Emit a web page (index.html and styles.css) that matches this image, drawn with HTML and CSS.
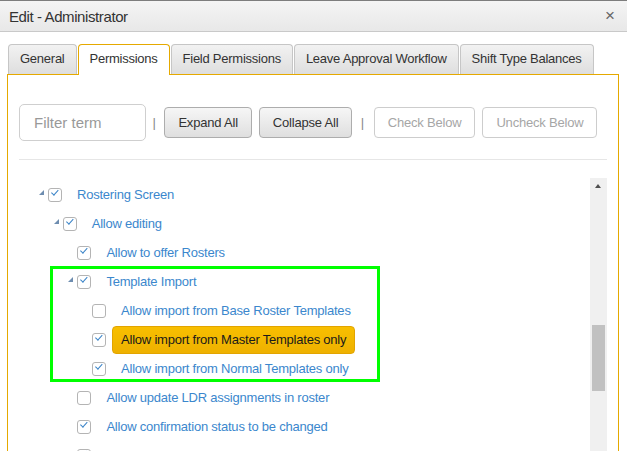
FILE: index.html
```html
<!DOCTYPE html>
<html lang="en">
<head>
  <meta charset="UTF-8" />
  <title>Edit - Administrator</title>
  <link rel="stylesheet" href="styles.css">
</head>
<body>
  <div class="dialog">
    <div class="titlebar">
      <span class="title">Edit - Administrator</span>
      <span class="close">&times;</span>
    </div>

    <div class="dialog-body">
      <ul class="tabs">
        <li class="tab">General</li>
        <li class="tab active">Permissions</li>
        <li class="tab">Field Permissions</li>
        <li class="tab">Leave Approval Workflow</li>
        <li class="tab">Shift Type Balances</li>
      </ul>

      <div class="tab-panel">
        <div class="toolbar">
          <input type="text" class="filter" placeholder="Filter term" />
          <span class="sep">|</span>
          <button class="btn">Expand All</button>
          <button class="btn">Collapse All</button>
          <span class="sep">|</span>
          <button class="btn" disabled>Check Below</button>
          <button class="btn" disabled>Uncheck Below</button>
        </div>

        <div class="divider"></div>

        <div class="tree-wrap">
          <ul class="tree">
            <li>
              <div class="node"><span class="toggle"></span><span class="cb checked"></span><span class="label">Rostering Screen</span></div>
              <ul>
                <li>
                  <div class="node"><span class="toggle"></span><span class="cb checked"></span><span class="label">Allow editing</span></div>
                  <ul>
                    <li><div class="node"><span class="toggle none"></span><span class="cb checked"></span><span class="label">Allow to offer Rosters</span></div></li>
                    <li>
                      <div class="node"><span class="toggle"></span><span class="cb checked"></span><span class="label">Template Import</span></div>
                      <ul>
                        <li><div class="node"><span class="toggle none"></span><span class="cb"></span><span class="label">Allow import from Base Roster Templates</span></div></li>
                        <li><div class="node"><span class="toggle none"></span><span class="cb checked"></span><span class="label selected">Allow import from Master Templates only</span></div></li>
                        <li><div class="node"><span class="toggle none"></span><span class="cb checked"></span><span class="label">Allow import from Normal Templates only</span></div></li>
                      </ul>
                    </li>
                    <li><div class="node"><span class="toggle none"></span><span class="cb"></span><span class="label">Allow update LDR assignments in roster</span></div></li>
                    <li><div class="node"><span class="toggle none"></span><span class="cb checked"></span><span class="label">Allow confirmation status to be changed</span></div></li>
                    <li><div class="node"><span class="toggle none"></span><span class="cb checked"></span><span class="label">Allow roster comments</span></div></li>
                  </ul>
                </li>
              </ul>
            </li>
          </ul>

          <div class="scrollbar">
            <span class="scroll-up"></span>
            <span class="scroll-thumb"></span>
          </div>

          <!-- highlight box drawn over the template import group -->
          <div class="mark-box"></div>
        </div>
      </div>
    </div>
  </div>
</body>
</html>
```

FILE: styles.css
```css
body {
  margin: 0;
  font-family: "Liberation Sans", Arial, sans-serif;
  background: #fff;
  overflow: hidden;
}

.dialog {
  border-top: 1px solid #7d7d7d;
}

.titlebar {
  height: 30px;
  display: flex;
  align-items: center;
  justify-content: space-between;
  padding: 0 12px 0 9px;
  background: linear-gradient(#f4f4f4, #e8e8e8);
  border-bottom: 1px solid #c9c9c9;
}

.title {
  font-size: 15px;
  color: #333;
  letter-spacing: -0.4px;
}

.close {
  font-size: 17px;
  color: #666;
}

.dialog-body {
  padding: 12px 8px 0 7px;
}

.tabs {
  list-style: none;
  margin: 0 0 0 1px;
  padding: 0;
  display: flex;
  gap: 1px;
  position: relative;
  z-index: 1;
}

.tab {
  height: 29px;
  line-height: 28px;
  padding: 0 11px;
  font-size: 13px;
  color: #333;
  letter-spacing: -0.25px;
  white-space: nowrap;
  background: linear-gradient(#f2f2f2, #dedede);
  border: 1px solid #c6c6c6;
  border-bottom: none;
  border-radius: 4px 4px 0 0;
  margin-bottom: -1px;
}

.tab.active {
  background: #fff;
  border-color: #e5a900;
  height: 30px;
}

.tab-panel {
  border: 1px solid #e5a900;
  border-bottom: none;
  padding: 29px 11px 0 11px;
  height: 500px;
}

.toolbar {
  display: flex;
  align-items: center;
  height: 37px;
}

.filter {
  box-sizing: border-box;
  flex-shrink: 0;
  width: 127px;
  height: 37px;
  border: 1px solid #cfcfcf;
  border-radius: 5px;
  padding: 0 14px;
  font-family: inherit;
  font-size: 15px;
  color: #333;
}

.filter::placeholder {
  color: #999;
}

.sep {
  font-size: 13px;
  color: #888;
  margin: 0 8.5px 0 6.5px;
}

.btn + .sep {
  margin-left: 8.5px;
  margin-right: 9.5px;
}

.btn {
  flex-shrink: 0;
  white-space: nowrap;
  height: 31px;
  padding: 0 13px;
  font-family: inherit;
  font-size: 13px;
  letter-spacing: -0.2px;
  color: #333;
  background: linear-gradient(#f6f6f6, #dfdfdf);
  border: 1px solid #adadad;
  border-radius: 4px;
}

.btn + .btn {
  margin-left: 7px;
}

.btn:disabled {
  background: #fff;
  border-color: #cdcdcd;
  color: #a6a6a6;
}

.divider {
  margin-top: 18px;
  height: 1px;
  background: #e6e6e6;
}

.tree-wrap {
  margin-top: 18px;
  height: 300px;
  display: flex;
  position: relative;
  overflow: hidden;
}

.tree, .tree ul {
  list-style: none;
  margin: 0;
  padding: 0;
}

.tree {
  flex: 1;
  padding: 2px 0 0 19px;
}

.tree ul {
  padding-left: 14.7px;
}

.node {
  height: 29px;
  display: flex;
  align-items: center;
}

.toggle {
  width: 10px;
  height: 14px;
  position: relative;
}

.toggle::after {
  content: "";
  position: absolute;
  left: 1px;
  top: 2px;
  border-style: solid;
  border-width: 0 0 5px 5px;
  border-color: transparent transparent #6e8db0 transparent;
}

.toggle.none::after {
  display: none;
}

.cb {
  box-sizing: border-box;
  width: 14px;
  height: 14px;
  border: 1px solid #b4b4b4;
  border-radius: 3px;
  background: #fff;
  position: relative;
}

.cb.checked::after {
  content: "";
  position: absolute;
  left: 3px;
  top: 1px;
  width: 6px;
  height: 3px;
  border-left: 1.6px solid #3a84c8;
  border-bottom: 1.6px solid #3a84c8;
  transform: translate(-1px, 3px) rotate(-48deg);
  transform-origin: left top;
}

.label {
  margin-left: 6px;
  padding: 0 8px;
  height: 26px;
  line-height: 26px;
  border: 1px solid transparent;
  border-radius: 4px;
  font-size: 13px;
  letter-spacing: -0.22px;
  color: #3b87cd;
  white-space: nowrap;
}

.label.selected {
  color: #1a1a1a;
  background: linear-gradient(#f8bf00, #eeb100);
  border-color: #e2a400;
}

.scrollbar {
  width: 17px;
  background: #f0f0f0;
  position: relative;
}

.scroll-up {
  position: absolute;
  left: 5px;
  top: 6px;
  border-style: solid;
  border-width: 0 3.5px 4px 3.5px;
  border-color: transparent transparent #505050 transparent;
}

.scroll-thumb {
  position: absolute;
  left: 2px;
  right: 2px;
  top: 147px;
  height: 66px;
  background: #c1c1c1;
}

.mark-box {
  position: absolute;
  left: 31px;
  top: 88px;
  width: 324px;
  height: 110px;
  border: 3px solid #00ff00;
}
```
